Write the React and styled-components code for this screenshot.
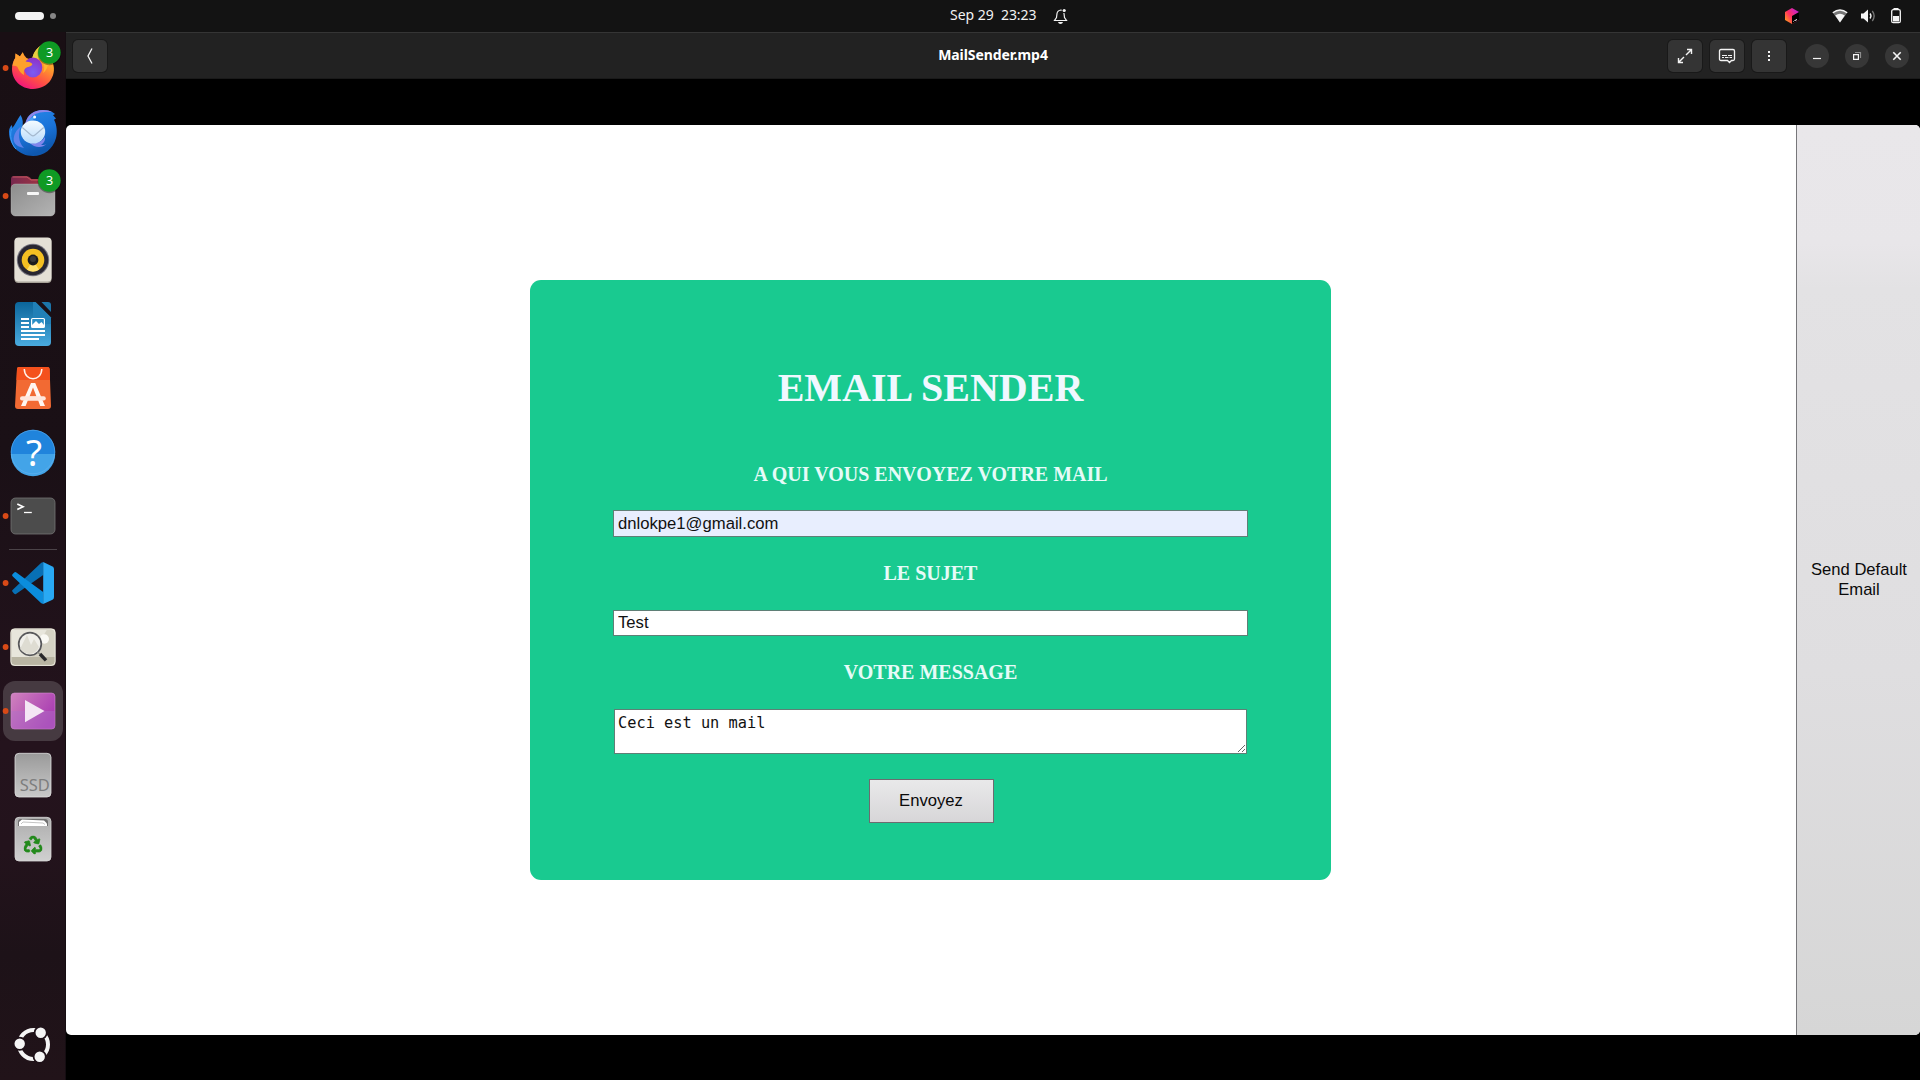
import React from "react";
import styled, { createGlobalStyle } from "styled-components";
import { FaRecycle } from "react-icons/fa";

const GlobalStyle = createGlobalStyle`
  *, *::before, *::after { box-sizing: border-box; }
  body { margin: 0; background: #000; overflow: hidden; }
`;

const Desktop = styled.div`
  width: 1920px;
  height: 1080px;
  display: grid;
  grid-template: 32px 1fr / 66px 1fr;
  background: #000;
  font-family: "Noto Sans", "Open Sans", sans-serif;
`;

/* ---------- top panel ---------- */

const TopBar = styled.header`
  grid-column: 1 / -1;
  display: grid;
  grid-template-columns: 950px 1fr auto;
  align-items: center;
  background: #131313;
  color: #f2f2f2;
`;

const Workspaces = styled.div`
  display: flex;
  align-items: center;
  gap: 6px;
  padding-left: 15px;
`;

const ActiveSpace = styled.span`
  width: 29px;
  height: 8px;
  border-radius: 4px;
  background: #f4f4f4;
`;

const IdleSpace = styled.span`
  width: 6px;
  height: 6px;
  border-radius: 50%;
  background: #868686;
`;

const Clock = styled.div`
  display: flex;
  align-items: center;
  height: 32px;
  font-size: 14px;
  line-height: 30px;
  white-space: pre;

  span { width: 51px; height: 32px; }
  time { width: 53px; height: 32px; letter-spacing: -0.1px; }
`;

const Tray = styled.div`
  display: flex;
  align-items: center;
  padding-right: 16px;
`;

const TrayIcon = styled.svg`
  width: 16px;
  height: 16px;
  margin-left: ${(p) => p.$gap}px;
  overflow: visible;
`;

/* ---------- dock ---------- */

const Dock = styled.nav`
  display: flex;
  flex-direction: column;
  padding-top: 4px;
  background: linear-gradient(180deg, #190f14 0%, #1a1016 40%, #24131d 68%, #23131c 78%, #1d1218 88%, #211319 100%);
  border-right: 1px solid #150d12;
`;

const Slot = styled.div`
  width: 66px;
  height: 64px;
  display: flex;
  flex: none;
  align-items: center;
  justify-content: center;
  margin-top: ${(p) => (p.$last ? "auto" : 0)};
  margin-bottom: ${(p) => (p.$last ? 4 : 0)}px;
`;

const SlotPlate = styled.div`
  width: 60px;
  height: 60px;
  display: flex;
  align-items: center;
  justify-content: center;
  border-radius: 12px;
  background: ${(p) => (p.$active ? "#463a41" : "transparent")};
`;

const Glyph = styled.svg`
  width: 66px;
  height: 64px;
  flex: none;
`;

const DockRule = styled.div`
  flex: none;
  width: 48px;
  height: 1px;
  margin: 1px 0 1px 9px;
  background: #4b4348;
`;

/* ---------- window ---------- */

const Window = styled.main`
  display: flex;
  flex-direction: column;
  padding-bottom: 45px;
`;

const HeaderBar = styled.div`
  height: 47px;
  display: grid;
  grid-template-columns: 1fr auto 1fr;
  align-items: center;
  padding: 0 11px 0 7px;
  background: #222;
  border-top: 1px solid #353535;
  border-bottom: 1px solid #1a1a1a;
`;

const WindowTitle = styled.h2`
  margin: 0 0 2px 4px;
  font-size: 14px;
  line-height: 20px;
  font-weight: 700;
  letter-spacing: -0.08px;
  color: #fff;
`;

const ToolButton = styled.button`
  width: 34px;
  height: 32px;
  padding: 0;
  display: flex;
  align-items: center;
  justify-content: center;
  border: 0;
  border-radius: 5px;
  background: #343434;
  box-shadow: 0 0 0 1px #191919;
  color: #f4f4f4;
`;

const ControlButton = styled(ToolButton)`
  width: 24px;
  height: 24px;
  border-radius: 50%;
  background: #373737;
  box-shadow: none;
`;

const HeaderActions = styled.div`
  display: flex;
  align-items: center;
  justify-content: flex-end;
`;

const ToolGroup = styled.div`
  display: flex;
  gap: 8px;
  margin-right: 19px;
`;

const ControlGroup = styled.div`
  display: flex;
  gap: 16px;
`;

const ButtonIcon = styled.svg`
  width: 16px;
  height: 16px;
  fill: none;
  stroke: currentColor;
  overflow: visible;
`;

const Video = styled.section`
  flex: 1;
  display: flex;
  margin-top: 46px;
  border-radius: 5px;
  overflow: hidden;
  background: #fff;
`;

const Page = styled.div`
  flex: 1;
  display: flex;
  align-items: center;
  justify-content: center;
  padding-right: 1px;
`;

const Card = styled.form`
  width: 801px;
  height: 600px;
  display: flex;
  flex-direction: column;
  align-items: center;
  padding-top: 85px;
  border-radius: 11px;
  background: #19ca90;
  color: #f0f8ff;
  font-family: "Liberation Serif", "Times New Roman", serif;
`;

const CardTitle = styled.h1`
  margin: 0 0 51px;
  font-size: 40px;
  line-height: 46px;
  font-weight: 700;
`;

const Label = styled.label`
  height: 24px;
  margin-bottom: ${(p) => p.$below}px;
  font-size: 20px;
  line-height: 24px;
  font-weight: 700;
  color: #e6fbf8;
`;

const Field = styled.input`
  width: 635px;
  height: ${(p) => p.$height}px;
  margin: 0 0 24px;
  padding: 0 4px;
  border: 1px solid #5f7f76;
  border-radius: 0;
  outline: 0;
  background: ${(p) => (p.$filled ? "#e8eefe" : "#fff")};
  color: #111;
  font: 16.67px "Liberation Sans", Arial, sans-serif;
`;

const Message = styled.textarea`
  width: 633px;
  height: 45px;
  margin: 0 0 25px;
  padding: 3px;
  border: 1px solid #5f7f76;
  border-radius: 0;
  outline: 0;
  overflow: hidden;
  resize: both;
  background: #fff;
  color: #111;
  font: 15.3px/20px "DejaVu Sans Mono", monospace;
`;

const SubmitButton = styled.button`
  width: 125px;
  height: 44px;
  margin-left: 1px;
  padding: 0;
  border: 1px solid #6c6c70;
  background: linear-gradient(180deg, #e9e9ea, #d7d6d8);
  color: #0a0a0a;
  font: 16.67px "Liberation Sans", Arial, sans-serif;
`;

const DefaultButton = styled.button`
  width: 124px;
  padding: 0 9px 0 10px;
  border: 0;
  border-left: 1px solid #77777a;
  background: linear-gradient(180deg, #e9e7ea 0%, #e8e6e9 13%, #e3e2e4 18%, #dfdee0 60%, #d6d6d6 100%);
  color: #0a0a0a;
  font: 16.6px/20px "Liberation Sans", Arial, sans-serif;
`;

/* ---------- dock icons ---------- */

const RunningDot = () => <circle cx="5.6" cy="32" r="2.9" fill="#d84a17" />;

const CountBadge = () => (
  <g>
    <circle cx="49.4" cy="17.4" r="11.8" fill="#000" opacity=".35" />
    <circle cx="49.4" cy="16.5" r="11.3" fill="#0f9a24" />
    <text x="49.5" y="21" textAnchor="middle" fontSize="12.5" fill="#fff">3</text>
  </g>
);

const Firefox = () => (
  <>
    <defs>
      <linearGradient id="ffBody" x1=".85" y1=".1" x2=".35" y2="1">
        <stop offset="0" stopColor="#ffc63a" />
        <stop offset=".35" stopColor="#ff9a2c" />
        <stop offset=".7" stopColor="#ff4f45" />
        <stop offset="1" stopColor="#f2187a" />
      </linearGradient>
      <radialGradient id="ffGlobe" cx=".5" cy=".75" r=".75">
        <stop offset="0" stopColor="#7a5cf4" />
        <stop offset="1" stopColor="#9030c4" />
      </radialGradient>
    </defs>
    <path d="M32 24C33 17 36 13 41 9.500C43 14 50 18 52 25C55 31 54.500 38 51 43.500C47.500 49.500 40 53 33 53C21 53 12 44 12 33C12 28.500 13.200 25 15.300 22L15.600 17.500L20 20.500Q21.500 18 22.800 16.200Q23.500 19 26.500 22Z" fill="url(#ffBody)" />
    <path d="M32 24C33 17 36 13 41 9.500C43 14 50 18 52 25L48 30L40 23Z" fill="#e6cf3e" />
    <path d="M15.500 17.500L20 20.500L22.800 16.200C23.500 20 25 22.300 29 23.500L22 33C18 31 15 29 12.600 30C13 26.500 14 24 15.300 22Z" fill="#ffa02e" />
    <ellipse cx="33" cy="31.500" rx="9.300" ry="10" fill="url(#ffGlobe)" />
    <path d="M17 25.500C21 24.500 24 25.500 27 25.800C30 26 32.700 27.500 32.300 28.500C31 31 27.500 30.500 25.500 32.300C23.500 34 23.800 37 24 39C18.500 36 16.500 30 17 25.500Z" fill="#ffa12a" />
    <path d="M37 22.500C43.500 24 46 30 43 37C47.500 34 49.500 27 47 22Z" fill="#ffb62f" />
  </>
);

const Thunderbird = () => (
  <>
    <defs>
      <linearGradient id="tbBody" x1="0" y1="0" x2=".4" y2="1">
        <stop offset="0" stopColor="#2a8cec" />
        <stop offset=".6" stopColor="#1a72d8" />
        <stop offset="1" stopColor="#0e57ae" />
      </linearGradient>
      <linearGradient id="tbMail" x1="0" y1="0" x2="0" y2="1">
        <stop offset="0" stopColor="#f5fbff" />
        <stop offset="1" stopColor="#b9dbfb" />
      </linearGradient>
    </defs>
    <path d="M25.500 23C27 15 34 10 43 10C48 10 52 11.500 55 14L53 15.200L56 18.500L54 19.800C57 25 57.500 33 56 38C53 49 44 56 33 56C19 56 9 45 9 32C9 29 10 26.500 12 25L12.300 28C15 25 17 20 20.500 15C23 19 23.500 23 22 28Z" fill="url(#tbBody)" />
    <path d="M25 24.500C27 15 34 10 43 10C47 10 50 10.800 52 12C42 11.500 35 12.500 31.500 17C29.500 19.500 28 22 25 24.500Z" fill="#8e86ea" />
    <path d="M28 20.500Q32 15.500 35 17.500Q33 21 28 22Z" fill="#4aa0f6" />
    <path d="M13.800 41C13 35 16.500 29.500 21 26.500C17.500 34 18.500 42 24 48C19 47 15 45 13.800 41Z" fill="#5f82ea" />
    <path d="M11.500 29C9.500 35 11 44 16 49" fill="none" stroke="#3f9ef8" strokeWidth="1" />
    <circle cx="34.600" cy="17" r="1.500" fill="#f3fbff" />
    <path d="M30 43C37 44 42 42 45 37C45.500 41 43 44 41 44.500C43 45.500 45 45 46.500 44C42 48.500 34 47.500 30 43Z" fill="#7f86ec" />
    <ellipse cx="33" cy="32" rx="12.200" ry="11.500" fill="url(#tbMail)" />
    <path d="M22.300 27.500L31 35Q33 36.800 35 35L43.700 27.500" fill="none" stroke="#a5b9cf" strokeWidth="1.100" />
  </>
);

const Files = () => (
  <>
    <defs>
      <linearGradient id="flBack"><stop offset="0" stopColor="#77284e" /><stop offset="1" stopColor="#b03a3f" /></linearGradient>
      <linearGradient id="flBody" x1="0" y1="0" x2="1" y2="1"><stop offset="0" stopColor="#8d8d8d" /><stop offset="1" stopColor="#b4b4b4" /></linearGradient>
    </defs>
    <path d="M11 42V15Q11 12 14 12H26.500Q28.500 12 30 13.500L31.500 15H52Q55 15 55 18V42Z" fill="url(#flBack)" />
    <path d="M12.500 13H27L31 16H53" fill="none" stroke="#dc6a68" strokeWidth=".7" />
    <rect x="11" y="20" width="44" height="32" rx="4.500" fill="url(#flBody)" stroke="#c5c5c5" strokeOpacity=".5" strokeWidth=".7" />
    <rect x="27" y="28" width="12" height="3" rx="1" fill="#f7f7f7" />
  </>
);

const Rhythmbox = () => (
  <>
    <rect x="14.500" y="10" width="37" height="45" rx="4" fill="#a7a298" />
    <rect x="14.500" y="9.500" width="37" height="44" rx="4" fill="#e4e0d6" />
    <circle cx="33" cy="32" r="16.200" fill="#777580" />
    <circle cx="33" cy="32" r="15.200" fill="#282631" />
    <circle cx="33" cy="32" r="11.300" fill="#f4c022" />
    <path d="M33 32L27 41.800A11.300 11.300 0 0 0 39 41.800Z" fill="#ffe06c" />
    <circle cx="33" cy="32" r="5.400" fill="#1c1c1d" />
    <circle cx="33" cy="31" r="3" fill="#39393a" />
  </>
);

const Writer = () => (
  <>
    <defs><linearGradient id="wrBg" x1="0" y1="0" x2="0" y2="1"><stop offset="0" stopColor="#0b659a" /><stop offset="1" stopColor="#4aabdf" /></linearGradient></defs>
    <path d="M15 14Q15 10 19 10H35.500L51 25.500V50Q51 54 47 54H19Q15 54 15 50Z" fill="url(#wrBg)" />
    <path d="M33 10H35.500L51 25.500V32H33Z" fill="#2180b7" />
    <path d="M41.500 10H48Q51 10 51 13V20Z" fill="#1c75a8" />
    <path d="M21 27H29M21 31H29M21 35H29M21 39H45M21 43H45M21 47H39" stroke="#fff" strokeWidth="1.900" />
    <rect x="31.600" y="26.500" width="12.800" height="9" rx="1" fill="#2b8fc6" stroke="#fff" strokeWidth="1.200" />
    <path d="M32 35V33L36 29L39 32L41.500 30L44 33V35Z" fill="#fff" />
  </>
);

const AppCenter = () => (
  <>
    <path d="M17 13Q17 11 19 11H47.500Q49.500 11 49.600 13L51 50Q51 53 48 53H18Q15 53 15 50Z" fill="#f26a33" />
    <path d="M17 13Q17 11 19 11H47.500Q49.500 11 49.600 13L50 24H16.500Z" fill="#f4511d" />
    <path d="M24.300 13C24.500 26 41.500 26 41.800 13" fill="none" stroke="#fff3ec" strokeWidth="1.500" />
    <path d="M31 27H35.200L45 50H40.200L38.200 44.500H27.800L25.600 50H21ZM33 31.500L29.500 40.500H36.500Z" fill="#fff6f1" fillRule="evenodd" />
    <rect x="20" y="40.300" width="25.800" height="4.200" rx="2.100" fill="#ffe6dc" />
  </>
);

const Help = () => (
  <>
    <circle cx="33" cy="32" r="22.200" fill="#2084dc" />
    <path d="M10.800 34H55.200A22.200 22.200 0 0 1 10.800 34Z" fill="#43a4e8" />
    <circle cx="33" cy="32" r="21.800" fill="none" stroke="#6bb7f3" strokeOpacity=".6" strokeWidth=".8" />
    <text x="34" y="45.600" textAnchor="middle" fontSize="37" fill="#fff">?</text>
  </>
);

const Terminal = () => (
  <>
    <rect x="11" y="14" width="44" height="36" rx="4.500" fill="#4c4c4c" stroke="#757575" strokeWidth=".8" />
    <path d="M17.300 20L23 22.700L17.300 25.400" fill="none" stroke="#fff" strokeWidth="1.700" />
    <path d="M24 28.500H31.800" stroke="#fff" strokeWidth="1.300" />
  </>
);

const VsCode = () => (
  <>
    <path d="M16 43Q15 43.500 14 42.500L12.300 40.500Q11.700 39.600 12.800 38.800L41 12Q42 11 43.200 11.200V24Z" fill="#0870b5" />
    <path d="M16 21.200Q15 20.800 14 21.700L12.300 23.500Q11.700 24.600 12.800 25.500L41 52Q42 53 43.200 52.800V41Z" fill="#0b8ddd" />
    <path d="M43.200 11L52.500 15.400Q54 16.200 54 18V46Q54 48 52.500 48.700L43.200 53Z" fill="#29a9f4" />
  </>
);

const ImageViewer = () => (
  <>
    <rect x="10.500" y="13.500" width="45" height="37.500" rx="4" fill="#b9b5a3" />
    <path d="M11.500 17Q11.500 14.500 14 14.500H52Q54.500 14.500 54.500 17V42H11.500Z" fill="#e8e6dc" />
    <path d="M47 14.500H54.500V42H31Z" fill="#d5d2c4" />
    <circle cx="44.300" cy="24" r="4.700" fill="#faf9f4" />
    <circle cx="30" cy="29" r="11.300" fill="#f0efea" stroke="#58585b" strokeWidth="1.700" />
    <path d="M20 34L27 20L31 30L34 24L39 32Q36 39 29 39Q23 38 20 34Z" fill="#dedcd2" />
    <path d="M37.500 37L40.500 39.500" stroke="#8a8a85" strokeWidth="1.500" />
    <path d="M40 39L46 45.300" stroke="#28282a" strokeWidth="3.400" />
    <rect x="10.900" y="13.900" width="44.200" height="36.500" rx="4" fill="none" stroke="#f4f2ea" strokeWidth=".8" />
  </>
);

const Videos = () => (
  <>
    <defs><linearGradient id="vdBg" x1="0" y1="0" x2="1" y2=".6"><stop offset="0" stopColor="#d083bd" /><stop offset="1" stopColor="#a83bb2" /></linearGradient></defs>
    <rect x="11" y="14" width="44" height="36" rx="3.500" fill="url(#vdBg)" stroke="#d88fd6" strokeOpacity=".8" strokeWidth=".7" />
    <path d="M11.300 32H54.700V47Q54.700 49.700 51.500 49.700H14.500Q11.300 49.700 11.300 47Z" fill="#b070c8" opacity=".45" />
    <path d="M25 21L44.500 32L25 43.300Z" fill="#f4e6f4" />
  </>
);

const Ssd = () => (
  <>
    <defs><linearGradient id="sdBg" x1="0" y1="0" x2="0" y2="1"><stop offset="0" stopColor="#9a9a9a" /><stop offset="1" stopColor="#c9c9c9" /></linearGradient></defs>
    <rect x="15" y="10.300" width="36" height="43.700" rx="4" fill="url(#sdBg)" stroke="#dedede" strokeWidth=".8" />
    <text x="19.700" y="48.300" fontSize="16.500" fill="#7e7e7e">SSD</text>
  </>
);

const Trash = () => (
  <>
    <defs><linearGradient id="trBg" x1="0" y1="0" x2="0" y2="1"><stop offset="0" stopColor="#adadad" /><stop offset="1" stopColor="#d0d0d0" /></linearGradient></defs>
    <rect x="15" y="10.300" width="36" height="43.700" rx="4" fill="url(#trBg)" stroke="#d8d8d8" strokeWidth=".8" />
    <path d="M18 19V15Q18 12 21 12H45Q48 12 48 15V19Z" fill="#6e6e6e" />
    <path d="M19 19V15L22 12.500L44 13.500L47 16.500V19Z" fill="#fff" />
    <path d="M21 17L23 15L43 16L45 17.500" fill="none" stroke="#aaa" strokeWidth=".7" />
    <FaRecycle x="23.800" y="28.800" size="18.500" color="#238a1c" stroke="#238a1c" strokeWidth="22" />
  </>
);

const UbuntuLogo = () => (
  <>
    <circle cx="33.500" cy="32.500" r="14.500" fill="none" stroke="#f5f5f5" strokeWidth="4" />
    {[[40.7, 20.7], [19.7, 31.7], [39.7, 44.7]].map(([x, y]) => (
      <circle key={x} cx={x} cy={y} r="6.100" fill="#f5f5f5" stroke="#1f1219" strokeWidth="1.800" />
    ))}
  </>
);

const pinnedApps = [
  { name: "Firefox", Art: Firefox, running: true, badge: true },
  { name: "Thunderbird", Art: Thunderbird },
  { name: "Files", Art: Files, running: true, badge: true },
  { name: "Rhythmbox", Art: Rhythmbox },
  { name: "Writer", Art: Writer },
  { name: "App Center", Art: AppCenter },
  { name: "Help", Art: Help },
  { name: "Terminal", Art: Terminal, running: true },
];

const openApps = [
  { name: "Code", Art: VsCode, running: true },
  { name: "Image Viewer", Art: ImageViewer, running: true },
  { name: "Videos", Art: Videos, running: true, active: true },
  { name: "SSD", Art: Ssd },
  { name: "Trash", Art: Trash },
];

function DockItem({ Art, running, badge, active, last }) {
  return (
    <Slot $last={last}>
      <SlotPlate $active={active}>
        <Glyph viewBox="0 0 66 64">
          {running && <RunningDot />}
          <Art />
          {badge && <CountBadge />}
        </Glyph>
      </SlotPlate>
    </Slot>
  );
}

export default function App() {
  return (
    <Desktop>
      <GlobalStyle />
      <TopBar>
        <Workspaces>
          <ActiveSpace />
          <IdleSpace />
        </Workspaces>
        <Clock>
          <span>Sep 29</span>
          <time>23:23</time>
          <TrayIcon viewBox="0 0 16 16" $gap={-1}>
            <path d="M1.500 12.500H13.500L11.500 9.500L11 5.500Q10.500 2.500 8 2Q4.500 2.300 4 5.500L3.500 9.500Z" fill="none" stroke="#f2f2f2" strokeWidth="1.200" />
            <path d="M5 14H10Q9.500 16 7.500 16Q5.500 16 5 14Z" fill="#f2f2f2" />
            <circle cx="11.200" cy="2.500" r="2.600" fill="#131313" />
            <circle cx="11.200" cy="2.500" r="1.600" fill="#f2f2f2" />
          </TrayIcon>
        </Clock>
        <Tray>
          <TrayIcon viewBox="0 0 16 16" $gap={0}>
            <defs>
              <linearGradient id="cube" x1="0" y1=".8" x2="1" y2="0">
                <stop offset="0" stopColor="#ff9a1e" />
                <stop offset=".4" stopColor="#ff2f62" />
                <stop offset="1" stopColor="#b01cf0" />
              </linearGradient>
            </defs>
            <path d="M8 0L15 4V12L8 16L1 12V4Z" fill="url(#cube)" />
            <path d="M8 8L15 4V12L8 16Z" fill="#000" />
            <path d="M9.500 13.500L10.500 12.500M11 12.500L13 11.500" stroke="#fff" strokeWidth="1" />
          </TrayIcon>
          <TrayIcon viewBox="0 0 16 16" $gap={32}>
            <path d="M.8 4.800Q8 -.8 15.200 4.800L8 14.500Z" fill="#777" />
            <path d="M.8 4.800Q8 -.8 15.200 4.800" fill="none" stroke="#f5f5f5" strokeWidth="1.400" />
            <path d="M3.200 7.600Q8 4 12.800 7.600L8 14.500Z" fill="#f5f5f5" />
          </TrayIcon>
          <TrayIcon viewBox="0 0 16 16" $gap={12}>
            <path d="M1 5.500H3.500L8 1.500V14.500L3.500 10.500H1Z" fill="#f5f5f5" />
            <path d="M10 5.500Q12 8 10 10.500" fill="none" stroke="#f5f5f5" strokeWidth="1.300" />
            <path d="M12.300 3Q16 8 12.300 13" fill="none" stroke="#777" strokeWidth="1.300" />
          </TrayIcon>
          <TrayIcon viewBox="0 0 16 16" $gap={12}>
            <path d="M5.500 0H10.500V2H5.500Z" fill="#f5f5f5" />
            <rect x="3.700" y="1.700" width="8.600" height="13" rx="1.500" fill="none" stroke="#f5f5f5" strokeWidth="1.300" />
            <path d="M5 8H11V13.500H5Z" fill="#f5f5f5" />
          </TrayIcon>
        </Tray>
      </TopBar>

      <Dock>
        {pinnedApps.map((app) => <DockItem key={app.name} {...app} />)}
        <DockRule />
        {openApps.map((app) => <DockItem key={app.name} {...app} />)}
        <DockItem Art={UbuntuLogo} last />
      </Dock>

      <Window>
        <HeaderBar>
          <ToolButton aria-label="Back">
            <ButtonIcon viewBox="0 0 16 16" strokeWidth="1.300"><path d="M10 .5L6 8L10 15.500" /></ButtonIcon>
          </ToolButton>
          <WindowTitle>MailSender.mp4</WindowTitle>
          <HeaderActions>
            <ToolGroup>
              <ToolButton aria-label="Fullscreen">
                <ButtonIcon viewBox="0 0 16 16" strokeWidth="1.400">
                  <path d="M10 1.500H14.500V6M14.300 1.700L9 7M1.500 10V14.500H6M1.700 14.300L7 9" />
                </ButtonIcon>
              </ToolButton>
              <ToolButton aria-label="Subtitles">
                <ButtonIcon viewBox="0 0 16 16" strokeWidth="1.300">
                  <path d="M2 1.500H14Q15.500 1.500 15.500 3V11Q15.500 12.500 14 12.500H12.500L10.500 14.500L8.500 12.500H2Q.5 12.500 .5 11V3Q.5 1.500 2 1.500Z" />
                  <path d="M3 7.500H8M9 7.500H13M3 9.500H5M6 9.500H9.500M10.500 9.500H13" strokeWidth="1" />
                </ButtonIcon>
              </ToolButton>
              <ToolButton aria-label="Menu">
                <ButtonIcon viewBox="0 0 16 16" strokeWidth="2"><path d="M8 3V5M8 7V9M8 11V13" /></ButtonIcon>
              </ToolButton>
            </ToolGroup>
            <ControlGroup>
              <ControlButton aria-label="Minimize">
                <ButtonIcon viewBox="0 0 16 16" strokeWidth="1.200"><path d="M4 10.500H12" /></ButtonIcon>
              </ControlButton>
              <ControlButton aria-label="Restore">
                <ButtonIcon viewBox="0 0 16 16" strokeWidth="1.200">
                  <path d="M4.600 6.600H9.400V11.400H4.600Z" />
                  <path d="M6 4.500H11.500V10" stroke="#8d8d8d" />
                </ButtonIcon>
              </ControlButton>
              <ControlButton aria-label="Close">
                <ButtonIcon viewBox="0 0 16 16" strokeWidth="1.600"><path d="M4.300 4.300L11.700 11.700M11.700 4.300L4.300 11.700" /></ButtonIcon>
              </ControlButton>
            </ControlGroup>
          </HeaderActions>
        </HeaderBar>

        <Video>
          <Page>
            <Card>
              <CardTitle>EMAIL SENDER</CardTitle>
              <Label htmlFor="to" $below={24}>A QUI VOUS ENVOYEZ VOTRE MAIL</Label>
              <Field id="to" defaultValue="dnlokpe1@gmail.com" $height={27} $filled />
              <Label htmlFor="subject" $below={25}>LE SUJET</Label>
              <Field id="subject" defaultValue="Test" $height={26} />
              <Label htmlFor="message" $below={25}>VOTRE MESSAGE</Label>
              <Message id="message" defaultValue="Ceci est un mail" spellCheck={false} />
              <SubmitButton type="button">Envoyez</SubmitButton>
            </Card>
          </Page>
          <DefaultButton type="button">Send Default Email</DefaultButton>
        </Video>
      </Window>
    </Desktop>
  );
}
